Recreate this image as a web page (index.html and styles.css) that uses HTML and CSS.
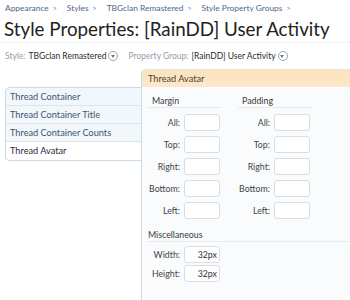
FILE: index.html
```html
<!DOCTYPE html>
<html>
<head>
<meta charset="utf-8">
<link rel="stylesheet" href="styles.css">
</head>
<body>
<div class="crumbs">
  <span>Appearance</span><span class="sep">&gt;</span><span>Styles</span><span class="sep">&gt;</span><span>TBGclan Remastered</span><span class="sep">&gt;</span><span>Style Property Groups</span><span class="sep">&gt;</span>
</div>
<h1 class="title">Style Properties: [RainDD] User Activity</h1>
<div class="filters">
  <span class="flabel">Style:</span><span class="fval">TBGclan Remastered</span><span class="drop"></span>
  <span class="flabel gap">Property Group:</span><span class="fval">[RainDD] User Activity</span><span class="drop"></span>
</div>
<div class="layout">
  <ul class="tabs">
    <li>Thread Container</li>
    <li>Thread Container Title</li>
    <li>Thread Container Counts</li>
    <li class="active">Thread Avatar</li>
  </ul>
  <div class="panel">
    <div class="phead">Thread Avatar</div>
    <div class="pbody">
      <div class="cols">
        <div class="col">
          <div class="sub">Margin</div>
          <div class="row"><label>All:</label><span class="inp"></span></div>
          <div class="row"><label>Top:</label><span class="inp"></span></div>
          <div class="row"><label>Right:</label><span class="inp"></span></div>
          <div class="row"><label>Bottom:</label><span class="inp"></span></div>
          <div class="row"><label>Left:</label><span class="inp"></span></div>
        </div>
        <div class="col">
          <div class="sub">Padding</div>
          <div class="row"><label>All:</label><span class="inp"></span></div>
          <div class="row"><label>Top:</label><span class="inp"></span></div>
          <div class="row"><label>Right:</label><span class="inp"></span></div>
          <div class="row"><label>Bottom:</label><span class="inp"></span></div>
          <div class="row"><label>Left:</label><span class="inp"></span></div>
        </div>
      </div>
      <div class="sub wide">Miscellaneous</div>
      <div class="row tight"><label>Width:</label><span class="inp val">32px</span></div>
      <div class="row tight"><label>Height:</label><span class="inp val">32px</span></div>
    </div>
  </div>
</div>
</body>
</html>
```
FILE: styles.css
```css
html, body { margin: 0; padding: 0; background: #fff; }
body {
  font-family: Lato, "Open Sans", sans-serif;
  color: #333;
  overflow: hidden;
  height: 300px;
}
.crumbs {
  font-size: 8.4px;
  color: #4f6887;
  padding-left: 5px;
  height: 16px;
  line-height: 16px;
  white-space: nowrap;
}
.crumbs .sep { margin: 0 10px 0 4px; color: #6f8199; font-size: 7px; }
.title {
  font-family: Lato, sans-serif;
  font-weight: normal;
  font-size: 18.8px;
  line-height: 22px;
  height: 22px;
  margin: 2px 0 0 0;
  padding: 0 0 2px 4px;
  color: #222;
  border-bottom: 1px solid #eef2f6;
  white-space: nowrap;
}
.filters {
  font-size: 8.5px;
  margin: 6px 0 0 5px;
  height: 14px;
  line-height: 14px;
  display: flex;
  align-items: center;
  white-space: nowrap;
}
.flabel { color: #939eab; margin-right: 3px; }
.flabel.gap { margin-left: 10px; }
.fval { color: #2b2b2b; }
.drop {
  display: inline-block;
  width: 8px; height: 8px;
  border: 1px solid #9aa6b3;
  border-radius: 50%;
  margin-left: 2px;
  position: relative;
  background: #fff;
}
.drop::after {
  content: "";
  position: absolute;
  left: 1.5px; top: 3px;
  border-left: 2.5px solid transparent;
  border-right: 2.5px solid transparent;
  border-top: 3px solid #6c7a8a;
}
.layout {
  display: flex;
  margin-top: 6px;
  padding-left: 5px;
}
.tabs {
  list-style: none;
  margin: 18px 0 0 0;
  padding: 0;
  width: 135px;
  border: 1px solid #c9dce6;
  border-right: none;
  border-radius: 5px 0 0 5px;
  overflow: hidden;
  align-self: flex-start;
  background: #f2f7fb;
}
.tabs li {
  height: 17px;
  line-height: 17px;
  font-size: 9.2px;
  color: #3d5670;
  padding-left: 4px;
  border-bottom: 1px solid #d9e6ee;
  white-space: nowrap;
}
.tabs li:last-child { border-bottom: none; height: 18px; line-height: 18px; }
.tabs li.active { background: #fff; color: #1e2c3d; }
.panel {
  flex: 1;
  border-left: 1px solid #c9dce6;
  border-top: 1px solid #dfe6ec;
  border-radius: 5px 0 0 0;
  background: #f9fbfd;
  height: 240px;
}
.phead {
  height: 17px;
  line-height: 17px;
  font-size: 9.2px;
  color: #4a3f30;
  padding-left: 6px;
  background: linear-gradient(#fde2bb, #fce8cd);
  border-radius: 4px 0 0 0;
}
.pbody { padding: 7px 0 0 6px; }
.cols { display: flex; gap: 16px; }
.col { width: 74px; }
.sub {
  font-size: 8.8px;
  color: #3a3a3a;
  padding: 0 0 0 4px;
  height: 13px;
  line-height: 13px;
  border-bottom: 1px solid #e5ebf1;
  margin-bottom: 6px;
}
.sub.wide { margin-top: 4px; margin-bottom: 4px; padding-left: 0; }
.row {
  display: flex;
  align-items: center;
  height: 17px;
  margin-bottom: 5px;
}
.row.tight { margin-bottom: 2px; }
.row label {
  width: 32px;
  text-align: right;
  font-size: 8.8px;
  color: #444;
  margin-right: 4px;
}
.inp {
  display: block;
  width: 36px;
  height: 17px;
  box-sizing: border-box;
  border: 1px solid #d6dee6;
  border-radius: 3px;
  background: #fff;
  font-size: 8.8px;
  line-height: 15px;
  text-align: right;
  padding-right: 2px;
  color: #333;
}
```
